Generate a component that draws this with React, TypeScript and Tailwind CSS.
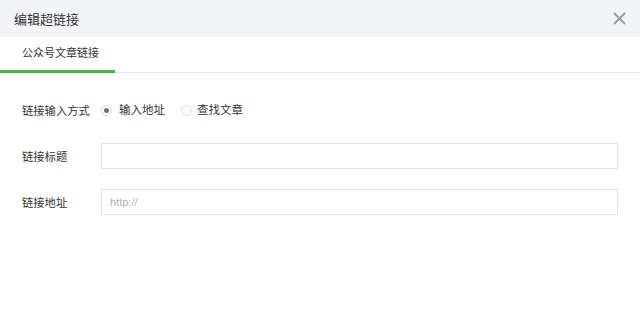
import React from "react";

const font = { fontFamily: '"Noto Sans CJK SC", "Noto Sans", sans-serif' };

export default function App() {
  return (
    <div className="w-[640px] h-[313px] bg-white flex flex-col" style={font}>
      <div className="h-[37px] bg-[#f3f4f7] flex items-center justify-between pl-[14px] pr-[14px]">
        <span className="text-[13px] text-[#353535]">编辑超链接</span>
        <svg width="13" height="13" viewBox="0 0 13 13" className="text-[#9c9c9c]">
          <path d="M1 1 L12 12 M12 1 L1 12" stroke="currentColor" strokeWidth="1.8" />
        </svg>
      </div>
      <div className="h-[36px] border-b border-[#e7e7e7] flex">
        <div className="w-[115px] border-b-[3px] border-[#44b549] -mb-px flex items-center pl-[22px] pb-[2px]">
          <span className="text-[11px] text-[#353535]">公众号文章链接</span>
        </div>
      </div>
      <div className="flex flex-col pl-[22px] pr-[22px] pt-[27px]">
        <div className="flex items-center h-[20px]">
          <span className="w-[79px] text-[11.3px] text-[#353535]">链接输入方式</span>
          <label className="flex items-center">
            <span className="w-[11px] h-[11px] rounded-full border border-[#d5d5d5] flex items-center justify-center">
              <span className="w-[5px] h-[5px] rounded-full bg-[#707070]" />
            </span>
            <span className="ml-[7px] text-[11.5px] text-[#353535]">输入地址</span>
          </label>
          <label className="flex items-center ml-[16px]">
            <span className="w-[11px] h-[11px] rounded-full border border-[#dcdcdc]" />
            <span className="ml-[5px] text-[11.5px] text-[#353535]">查找文章</span>
          </label>
        </div>
        <div className="flex items-center mt-[23px]">
          <span className="w-[79px] text-[11.3px] text-[#353535]">链接标题</span>
          <div className="flex-1 h-[26px] border border-[#e4e4e4]" />
        </div>
        <div className="flex items-center mt-[20px]">
          <span className="w-[79px] text-[11.3px] text-[#353535]">链接地址</span>
          <div className="flex-1 h-[26px] border border-[#e4e4e4] flex items-center pl-[8px]">
            <span className="text-[11px] text-[#b3b3b3]" style={{ fontFamily: '"Liberation Sans", sans-serif' }}>http://</span>
          </div>
        </div>
      </div>
    </div>
  );
}
